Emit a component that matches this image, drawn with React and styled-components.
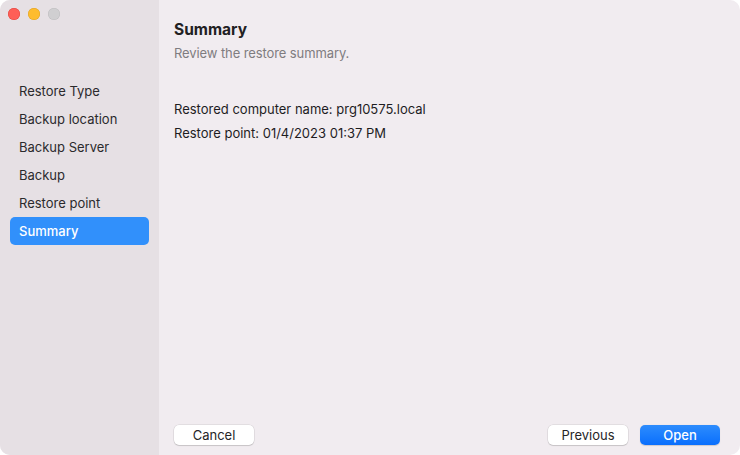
import React from "react";
import styled, { createGlobalStyle } from "styled-components";

const Global = createGlobalStyle`
  html, body { margin: 0; padding: 0; background: #ffffff; }
  body { font-family: Inter, "Liberation Sans", sans-serif; -webkit-font-smoothing: antialiased; }
  * { box-sizing: border-box; }
`;

const Window = styled.div`
  width: 740px;
  height: 455px;
  display: flex;
  border-radius: 10px;
  overflow: hidden;
  background: #f1ecf0;
`;

const Sidebar = styled.aside`
  width: 159px;
  flex: none;
  background: #e6e0e4;
  display: flex;
  flex-direction: column;
  padding: 8px 10px 0 10px;
`;

const Lights = styled.div`
  display: flex;
  gap: 8px;
  margin-left: -2px;
`;

const Light = styled.span`
  width: 12px;
  height: 12px;
  border-radius: 50%;
  background: ${(p) => p.$c};
  box-shadow: inset 0 0 0 0.5px ${(p) => p.$b};
`;

const NavList = styled.nav`
  margin-top: 57px;
  display: flex;
  flex-direction: column;
`;

const NavItem = styled.div`
  height: 28px;
  display: flex;
  align-items: center;
  padding-left: 9px;
  border-radius: 5px;
  font-size: 13px;
  color: ${(p) => (p.$active ? "#ffffff" : "#2b2a2c")};
  background: ${(p) => (p.$active ? "#3190fb" : "transparent")};
  font-weight: ${(p) => (p.$active ? 500 : 400)};
`;

const Main = styled.main`
  flex: 1;
  display: flex;
  flex-direction: column;
  padding: 19px 20px 10px 15px;
`;

const Title = styled.h1`
  margin: 0;
  font-size: 15.5px;
  font-weight: 700;
  color: #222022;
  line-height: 22px;
`;

const Subtitle = styled.p`
  margin: 3px 0 0 0;
  font-size: 13px;
  letter-spacing: -0.1px;
  color: #7f7c80;
  line-height: 18px;
`;

const Details = styled.div`
  margin-top: 38px;
  display: flex;
  flex-direction: column;
  gap: 6px;
`;

const Line = styled.div`
  font-size: 13px;
  color: #1e1d1f;
  line-height: 18px;
`;

const Footer = styled.div`
  margin-top: auto;
  display: flex;
  align-items: center;
  gap: 12px;
`;

const Spacer = styled.div`
  flex: 1;
`;

const Button = styled.button`
  width: 80px;
  height: 20px;
  border-radius: 5px;
  border: none;
  font-family: inherit;
  font-size: 13px;
  padding: 0;
  display: flex;
  align-items: center;
  justify-content: center;
  color: ${(p) => (p.$primary ? "#ffffff" : "#262527")};
  font-weight: ${(p) => (p.$primary ? 500 : 400)};
  background: ${(p) =>
    p.$primary ? "linear-gradient(#2d8cfd, #0a6ffd)" : "#ffffff"};
  box-shadow: ${(p) =>
    p.$primary
      ? "0 0.5px 1px rgba(0,0,0,0.15)"
      : "0 0 0 0.5px rgba(0,0,0,0.12), 0 1px 1px rgba(0,0,0,0.12)"};
`;

const items = ["Restore Type", "Backup location", "Backup Server", "Backup", "Restore point", "Summary"];

export default function App() {
  return (
    <>
      <Global />
      <Window>
        <Sidebar>
          <Lights>
            <Light $c="#fe5f57" $b="#e0443e" />
            <Light $c="#febc2e" $b="#dea123" />
            <Light $c="#d0cfd1" $b="#bdbcbe" />
          </Lights>
          <NavList>
            {items.map((it) => (
              <NavItem key={it} $active={it === "Summary"}>
                {it}
              </NavItem>
            ))}
          </NavList>
        </Sidebar>
        <Main>
          <Title>Summary</Title>
          <Subtitle>Review the restore summary.</Subtitle>
          <Details>
            <Line>Restored computer name: prg10575.local</Line>
            <Line>Restore point: 01/4/2023 01:37 PM</Line>
          </Details>
          <Footer>
            <Button>Cancel</Button>
            <Spacer />
            <Button>Previous</Button>
            <Button $primary>Open</Button>
          </Footer>
        </Main>
      </Window>
    </>
  );
}
